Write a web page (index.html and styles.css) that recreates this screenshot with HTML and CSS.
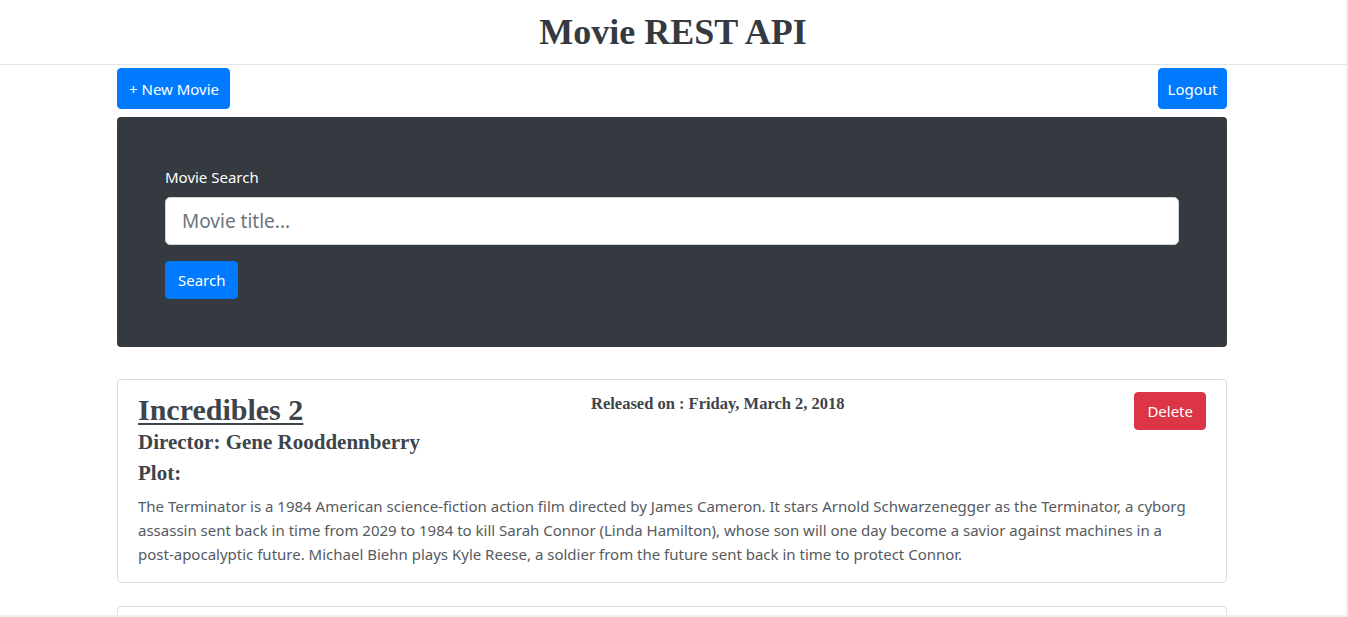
FILE: index.html
```html
<!DOCTYPE html>
<html lang="en">
<head>
<meta charset="utf-8">
<title>Movie REST API</title>
<link rel="stylesheet" href="styles.css">
</head>
<body>
<div class="page">
  <header class="site-header">
    <h1 class="site-title">Movie REST API</h1>
  </header>
  <main class="container">
    <div class="toolbar">
      <button class="btn btn-primary btn-top btn-new">+ New Movie</button>
      <button class="btn btn-primary btn-top">Logout</button>
    </div>
    <section class="jumbotron">
      <label class="search-label" for="q">Movie Search</label>
      <input id="q" class="search-input" type="text" placeholder="Movie title...">
      <button class="btn btn-primary btn-search">Search</button>
    </section>
    <article class="card">
      <div class="card-head">
        <div class="card-info">
          <h2 class="movie-title">Incredibles 2</h2>
          <h3 class="movie-meta">Director: Gene Rooddennberry</h3>
          <h3 class="movie-meta plot-label">Plot:</h3>
        </div>
        <div class="release">Released on : Friday, March 2, 2018</div>
        <button class="btn btn-danger">Delete</button>
      </div>
      <p class="plot">The Terminator is a 1984 American science-fiction action film directed by James Cameron. It stars Arnold Schwarzenegger as the Terminator, a cyborg assassin sent back in time from 2029 to 1984 to kill Sarah Connor (Linda Hamilton), whose son will one day become a savior against machines in a <span class="nowrap">post-apocalyptic</span> future. Michael Biehn plays Kyle Reese, a soldier from the future sent back in time to protect Connor.</p>
    </article>
    <article class="card card-next"></article>
  </main>
</div>
</body>
</html>
```

FILE: styles.css
```css
* { box-sizing: border-box; }

html { background: #f0f0f0; }

body {
  margin: 0;
  font-family: "Noto Sans", "Open Sans", sans-serif;
  font-size: 15px;
  line-height: 24px;
  color: #212529;
}

.page {
  width: 1346px;
  height: 615px;
  overflow: hidden;
  background: #fff;
}

.site-header {
  height: 65px;
  border-bottom: 1px solid #e3e3e3;
}

.site-title {
  margin: 0;
  text-align: center;
  font-family: "Liberation Serif", serif;
  font-weight: 700;
  font-size: 36px;
  line-height: 64px;
  color: #343a40;
}

.container {
  width: 1110px;
  margin: 0 119px 0 117px;
}

.toolbar {
  display: flex;
  justify-content: space-between;
  margin-top: 3px;
  margin-bottom: 8px;
}

.btn {
  font-family: "Noto Sans", "Open Sans", sans-serif;
  font-size: 15px;
  line-height: 24px;
  border: 1px solid transparent;
  border-radius: 4px;
  color: #fff;
  padding: 6px 12px;
  cursor: pointer;
}

.btn-primary { background: #007bff; border-color: #007bff; }
.btn-danger { background: #dc3545; border-color: #dc3545; height: 38px; padding: 6px 12px; }

.btn-top { height: 41px; padding: 7px 8.5px; }
.btn-new { padding: 7px 10px 7px 11px; }

.jumbotron {
  display: flex;
  flex-direction: column;
  align-items: flex-start;
  background: #343a40;
  border-radius: 4px;
  padding: 48px;
  margin-bottom: 32px;
}

.search-label {
  color: #fff;
  margin-bottom: 8px;
}

.search-input {
  width: 100%;
  height: 48px;
  border: 1px solid #ced4da;
  border-radius: 5px;
  padding: 8px 16px;
  font-family: "Noto Sans", "Open Sans", sans-serif;
  font-size: 19px;
  color: #495057;
  background: #fff;
  margin-bottom: 16px;
}

.search-input::placeholder { color: #6c757d; }

.btn-search { height: 38px; }

.card {
  border: 1px solid #dcdcdc;
  border-radius: 4px;
  padding: 12px 20px 16px;
  margin-bottom: 23px;
}

.card-head {
  display: flex;
  align-items: flex-start;
}

.card-info { width: 453px; }

.movie-title {
  margin: 0 0 2px;
  font-family: "Liberation Serif", serif;
  font-weight: 700;
  font-size: 30px;
  line-height: 36px;
  color: #3e444b;
  text-decoration: underline;
  text-decoration-thickness: 2px;
  text-underline-offset: 3px;
}

.movie-meta {
  margin: 0;
  font-family: "Liberation Serif", serif;
  font-weight: 700;
  font-size: 21px;
  line-height: 25px;
  color: #3e444b;
}

.plot-label { margin-top: 6px; }

.release {
  flex: 1;
  font-family: "Liberation Serif", serif;
  font-weight: 700;
  font-size: 16.5px;
  line-height: 20px;
  color: #3e444b;
  padding-top: 2px;
}

.plot {
  margin: 8px 0 0;
  color: #555a60;
}

.nowrap { white-space: nowrap; }

.card-next { height: 40px; }
```
